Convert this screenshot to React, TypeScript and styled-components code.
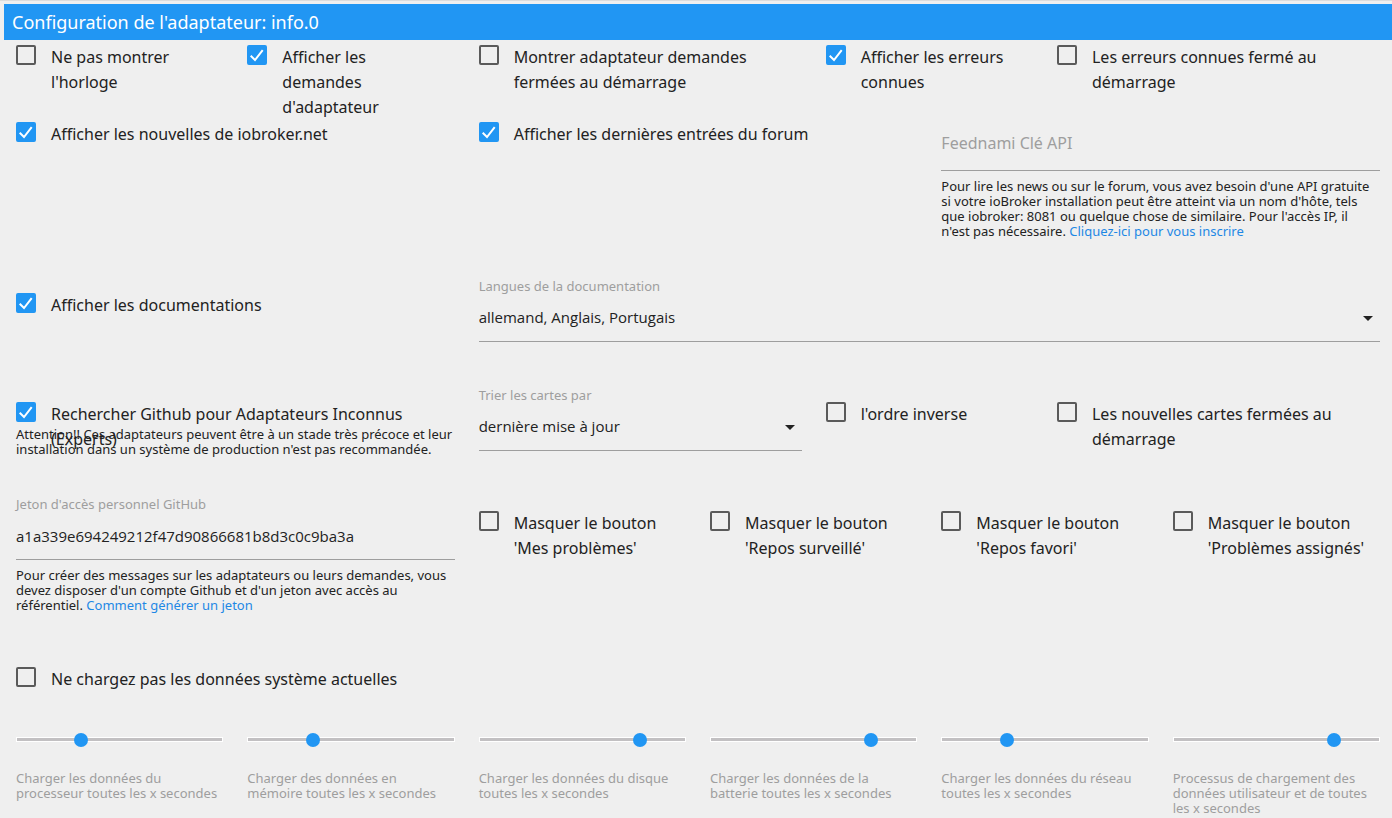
import React, { useId } from 'react';
import styled, { createGlobalStyle } from 'styled-components';

const GlobalStyle = createGlobalStyle`
  *, *::before, *::after { box-sizing: border-box; }
  html { background: #efefef; }
  body {
    margin: 0;
    background: #efefef;
    color: #222;
    font-family: 'Noto Sans', 'Open Sans', sans-serif;
    font-size: 13px;
    line-height: 15px;
  }
`;

const Page = styled.main`
  border-top: 1px solid #dcdcdc;
  padding: 3px 0 0 4px;
`;

const TitleBar = styled.h1`
  display: flex;
  align-items: center;
  height: 36px;
  margin: 0;
  padding: 0 8px;
  background: #2196f3;
  color: #fff;
  font-size: 18px;
  font-weight: 400;
`;

const Row = styled.div<{ $height: number }>`
  display: grid;
  grid-template-columns: repeat(12, minmax(0, 1fr));
  min-height: ${(p) => p.$height}px;
`;

const Cell = styled.div<{ $span: number; $top?: number }>`
  grid-column: span ${(p) => p.$span};
  padding: ${(p) => p.$top ?? 5}px 12px 0;
`;

const CheckLabel = styled.label<{ $single?: boolean }>`
  display: flex;
  align-items: flex-start;
  gap: 15px;
  height: ${(p) => (p.$single ? '25px' : 'auto')};
  font-size: 16px;
  line-height: 25px;
  white-space: pre-line;
  cursor: pointer;
`;

const CheckBoxWrap = styled.span`
  display: grid;
  flex: none;
  width: 20px;
  height: 20px;

  > * { grid-area: 1 / 1; }
`;

const CheckInput = styled.input`
  appearance: none;
  width: 20px;
  height: 20px;
  margin: 0;
  border: 2px solid #5a5a5a;
  border-radius: 2px;

  &:checked {
    border-color: #2196f3;
    background: #2196f3;
  }

  &:not(:checked) + svg { display: none; }
`;

const Field = styled.div`
  display: flex;
  flex-direction: column;
`;

const FieldLabel = styled.label`
  color: #9e9e9e;
`;

const TextInput = styled.input`
  width: 100%;
  height: 48px;
  padding: 0;
  border: 0;
  border-bottom: 1px solid #9e9e9e;
  border-radius: 0;
  outline: 0;
  background: transparent;
  color: #222;
  font-family: 'Open Sans', sans-serif;
  font-size: 15px;

  &::placeholder {
    color: #9e9e9e;
    font-family: 'Noto Sans', sans-serif;
    font-size: 16px;
    opacity: 1;
  }
  &:placeholder-shown { height: 49px; padding-bottom: 6px; }
`;

const SelectWrap = styled.div`
  display: grid;
  align-items: center;

  > * { grid-area: 1 / 1; }
  > svg { justify-self: end; pointer-events: none; }
`;

const Select = styled.select`
  appearance: none;
  width: 100%;
  height: 48px;
  padding: 0 0 2px;
  border: 0;
  border-bottom: 1px solid #9e9e9e;
  border-radius: 0;
  outline: 0;
  background: transparent;
  color: #222;
  font-family: 'Open Sans', sans-serif;
  font-size: 15px;
`;

const Help = styled.p<{ $gap?: number }>`
  margin: ${(p) => p.$gap ?? 8}px 0 0;
  white-space: pre-line;
`;

const Link = styled.a`
  color: #1e88e5;
  text-decoration: none;
`;

const Range = styled.input`
  appearance: none;
  display: block;
  width: 100%;
  height: 14px;
  margin: 8px 0 25px;
  background: transparent;

  &::-webkit-slider-runnable-track {
    height: 5px;
    border: 1px solid #fff;
    background: #c2c0c2;
  }

  &::-webkit-slider-thumb {
    appearance: none;
    width: 14px;
    height: 14px;
    margin: -5px 0 0;
    border: 0;
    border-radius: 50%;
    background: #2196f3;
  }
`;

const RangeLabel = styled.label`
  display: block;
  color: #9e9e9e;
  white-space: pre-line;
`;

function Check({ text, checked, single }: { text: string; checked?: boolean; single?: boolean }) {
  return (
    <CheckLabel $single={single}>
      <CheckBoxWrap>
        <CheckInput type="checkbox" defaultChecked={checked} />
        <svg width="20" height="20" viewBox="0 0 20 20" fill="none" stroke="#fff" strokeWidth="2" aria-hidden="true">
          <path d="M3.7 10.8L8 15L15.7 5.2" />
        </svg>
      </CheckBoxWrap>
      <span>{text}</span>
    </CheckLabel>
  );
}

function SelectField({ label, options }: { label: string; options: string[] }) {
  const id = useId();
  return (
    <Field>
      <FieldLabel htmlFor={id}>{label}</FieldLabel>
      <SelectWrap>
        <Select id={id}>
          {options.map((o) => (
            <option key={o}>{o}</option>
          ))}
        </Select>
        <svg width="24" height="24" viewBox="0 0 24 24" fill="#222" aria-hidden="true">
          <path d="M7 10l5 5 5-5z" />
        </svg>
      </SelectWrap>
    </Field>
  );
}

function Slider({ label, value }: { label: string; value: number }) {
  const id = useId();
  return (
    <Cell $span={2} $top={0}>
      <Range id={id} type="range" min={0} max={10} defaultValue={value} />
      <RangeLabel htmlFor={id}>{label}</RangeLabel>
    </Cell>
  );
}

const sliders = [
  { label: 'Charger les données du\nprocesseur toutes les x secondes', value: 3 },
  { label: 'Charger des données en\nmémoire toutes les x secondes', value: 3 },
  { label: 'Charger les données du disque\ntoutes les x secondes', value: 8 },
  { label: 'Charger les données de la\nbatterie toutes les x secondes', value: 8 },
  { label: 'Charger les données du réseau\ntoutes les x secondes', value: 3 },
  { label: 'Processus de chargement des\ndonnées utilisateur et de toutes\nles x secondes', value: 8 },
];

const hiddenButtons = ['Mes problèmes', 'Repos surveillé', 'Repos favori', 'Problèmes assignés'];

export default function App() {
  return (
    <>
      <GlobalStyle />
      <Page>
        <TitleBar>Configuration de l'adaptateur: info.0</TitleBar>

        <Row $height={80}>
          <Cell $span={2}><Check text={"Ne pas montrer\nl'horloge"} /></Cell>
          <Cell $span={2}><Check checked text={"Afficher les\ndemandes\nd'adaptateur"} /></Cell>
          <Cell $span={3}><Check text={'Montrer adaptateur demandes\nfermées au démarrage'} /></Cell>
          <Cell $span={2}><Check checked text={'Afficher les erreurs\nconnues'} /></Cell>
          <Cell $span={3}><Check text={'Les erreurs connues fermé au\ndémarrage'} /></Cell>
        </Row>

        <Row $height={156}>
          <Cell $span={4} $top={2}><Check checked text="Afficher les nouvelles de iobroker.net" /></Cell>
          <Cell $span={4} $top={2}><Check checked text="Afficher les dernières entrées du forum" /></Cell>
          <Cell $span={4} $top={2}>
            <Field>
              <TextInput type="text" placeholder="Feednami Clé API" aria-label="Feednami Clé API" />
              <Help>
                {"Pour lire les news ou sur le forum, vous avez besoin d'une API gratuite\nsi votre ioBroker installation peut être atteint via un nom d'hôte, tels\nque iobroker: 8081 ou quelque chose de similaire. Pour l'accès IP, il\nn'est pas nécessaire. "}
                <Link href="#feednami">Cliquez-ici pour vous inscrire</Link>
              </Help>
            </Field>
          </Cell>
        </Row>

        <Row $height={109}>
          <Cell $span={4} $top={17}><Check checked text="Afficher les documentations" /></Cell>
          <Cell $span={8} $top={3}>
            <SelectField label="Langues de la documentation" options={['allemand, Anglais, Portugais']} />
          </Cell>
        </Row>

        <Row $height={109}>
          <Cell $span={4} $top={17}>
            <Check checked single text={'Rechercher Github pour Adaptateurs Inconnus\n(Experts)'} />
            <Help $gap={0}>
              {"Attention!! Ces adaptateurs peuvent être à un stade très précoce et leur\ninstallation dans un système de production n'est pas recommandée."}
            </Help>
          </Cell>
          <Cell $span={3} $top={3}>
            <SelectField label="Trier les cartes par" options={['dernière mise à jour']} />
          </Cell>
          <Cell $span={2} $top={17}><Check text="l'ordre inverse" /></Cell>
          <Cell $span={3} $top={17}><Check text={'Les nouvelles cartes fermées au\ndémarrage'} /></Cell>
        </Row>

        <Row $height={168}>
          <Cell $span={4} $top={3}>
            <Field>
              <FieldLabel htmlFor="token">Jeton d'accès personnel GitHub</FieldLabel>
              <TextInput id="token" type="text" defaultValue="a1a339e694249212f47d90866681b8d3c0c9ba3a" />
              <Help>
                {"Pour créer des messages sur les adaptateurs ou leurs demandes, vous\ndevez disposer d'un compte Github et d'un jeton avec accès au\nréférentiel. "}
                <Link href="#token-help">Comment générer un jeton</Link>
              </Help>
            </Field>
          </Cell>
          {hiddenButtons.map((name) => (
            <Cell key={name} $span={2} $top={17}><Check text={`Masquer le bouton\n'${name}'`} /></Cell>
          ))}
        </Row>

        <Row $height={62}>
          <Cell $span={12}><Check text="Ne chargez pas les données système actuelles" /></Cell>
        </Row>

        <Row $height={94}>
          {sliders.map((s) => (
            <Slider key={s.label} {...s} />
          ))}
        </Row>
      </Page>
    </>
  );
}
